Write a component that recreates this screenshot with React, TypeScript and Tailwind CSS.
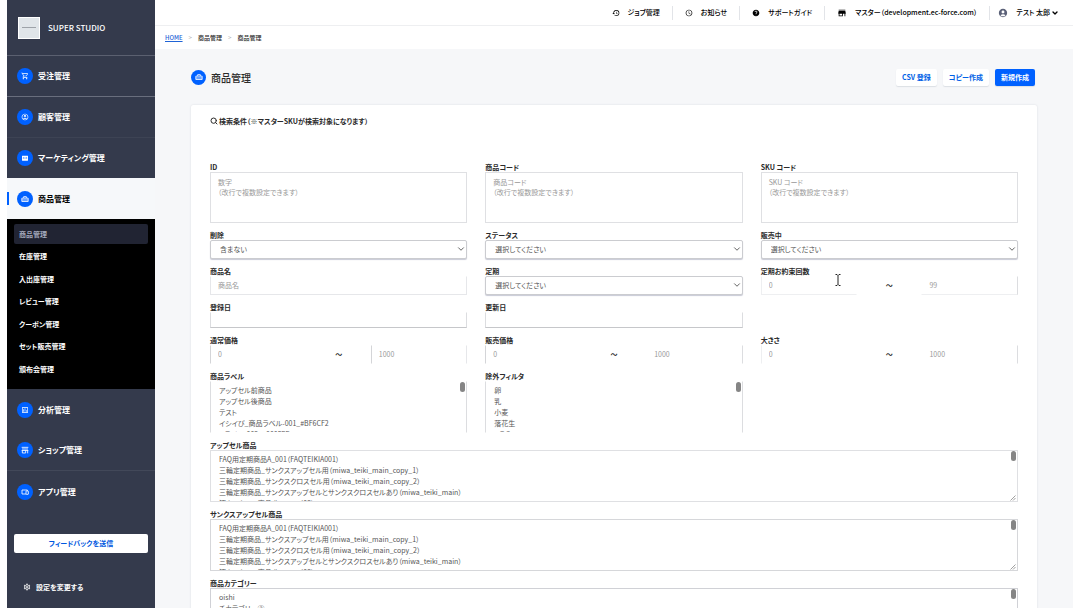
import type { ReactNode } from 'react';
import { clsx } from 'clsx';
import { twMerge } from 'tailwind-merge';
import {
    MdAccessTime,
    MdAccountCircle,
    MdHelp,
    MdHistory,
    MdOutlineAccountCircle,
    MdOutlineAssessment,
    MdOutlineSettings,
    MdOutlineShoppingCart,
    MdStore,
} from 'react-icons/md';
import { ChevronDown, Search } from 'lucide-react';

const BagIcon = () => (
    <svg viewBox="0 0 24 24" className="size-full" fill="none" stroke="currentColor" strokeWidth="2.5">
        <path d="M8 9V5h8v4M2.500 9.500h19v10h-19zM2.500 15h19" strokeLinejoin="round" />
    </svg>
);

const MegaphoneIcon = () => (
    <svg viewBox="0 0 24 24" className="size-full">
        <rect x="3" y="5" width="18" height="15" rx="1" fill="currentColor" />
        <path d="M7 15v-5l5 3 5-3v5" fill="none" stroke="#0061ff" strokeWidth="1.5" />
    </svg>
);

const ShopIcon = () => (
    <svg viewBox="0 0 24 24" className="size-full" fill="none" stroke="currentColor" strokeWidth="2.5">
        <path d="M2 4h20M3 9h18M2 13.500h20M4 13.500V21h10v-7.500M20 13.500V22" />
    </svg>
);

const AppIcon = () => (
    <svg viewBox="0 0 24 24" className="size-full" fill="none" stroke="currentColor" strokeWidth="2.5">
        <path d="M15 18H3V6h16v3" />
        <rect x="15" y="9" width="7" height="10" rx="1" />
    </svg>
);

const subMenu = [
    '商品管理',
    '在庫管理',
    '入出庫管理',
    'レビュー管理',
    'クーポン管理',
    'セット販売管理',
    '頒布会管理',
];

const upsellItems = [
    'FAQ用定期商品A_001（FAQTEIKIA001）',
    '三輪定期商品_サンクスアップセル用（miwa_teiki_main_copy_1）',
    '三輪定期商品_サンクスクロスセル用（miwa_teiki_main_copy_2）',
    '三輪定期商品_サンクスアップセルとサンクスクロスセルあり（miwa_teiki_main）',
    '猪クスクロス商品（iwanami02）',
];

interface MenuItemProps {
    icon: ReactNode;
    label: string;
    active?: boolean;
    className?: string;
}

const MenuItem = ({ icon, label, active, className }: MenuItemProps) => (
    <a
        href="#"
        className={twMerge(
            'flex h-[41px] items-center gap-[5px] text-[8px] font-bold',
            active ? 'bg-[#f6f8fa] text-black' : 'text-white',
            className
        )}
    >
        <span className={clsx('h-[13px] w-0.5', active && 'bg-[#0061ff]')} />
        <span className="ml-[3px] flex size-4 items-center justify-center rounded-full bg-[#0061ff] text-white">
            <span className="flex size-2">{icon}</span>
        </span>
        {label}
    </a>
);

const Sidebar = () => (
    <nav className="flex w-[148px] shrink-0 flex-col bg-[#343a4c] pb-2">
        <div className="flex h-14 items-center gap-2 border-b border-[#5b6070] pl-[11px] text-[8px] font-medium text-white">
            <span className="flex size-[22px] items-center justify-center border border-white bg-[#e0e5e9]">
                <span className="h-px w-3.5 bg-[#9da2a8]" />
            </span>
            SUPER STUDIO
        </div>
        <MenuItem
            icon={<MdOutlineShoppingCart className="size-full" />}
            label="受注管理"
            className="border-b border-[#696e7d]"
        />
        <MenuItem
            icon={<MdOutlineAccountCircle className="size-full" />}
            label="顧客管理"
            className="border-b border-[#3d4354]"
        />
        <MenuItem icon={<MegaphoneIcon />} label="マーケティング管理" className="h-10" />
        <MenuItem icon={<BagIcon />} label="商品管理" active />
        <div className="bg-black px-[7px] pt-[5px] pb-2.5">
            <ul className="flex h-[155px] flex-col justify-between text-[7px] font-bold text-white">
                {subMenu.map((label, i) => (
                    <li key={label}>
                        <a
                            href="#"
                            className={clsx(
                                'flex h-5 items-center rounded-xs pl-[5px]',
                                i === 0 && 'bg-[#212433] text-[#a3a8ba]'
                            )}
                        >
                            {label}
                        </a>
                    </li>
                ))}
            </ul>
        </div>
        <MenuItem icon={<MdOutlineAssessment className="size-full" />} label="分析管理" />
        <MenuItem icon={<ShopIcon />} label="ショップ管理" className="border-b border-[#424859]" />
        <MenuItem icon={<AppIcon />} label="アプリ管理" />
        <button
            type="button"
            className="mx-[7px] mt-[22px] h-[19px] rounded-xs bg-white text-[7px] font-bold text-[#0057e0]"
        >
            フィードバックを送信
        </button>
        <a href="#" className="mt-6 flex h-5 items-center gap-[5px] pl-4 text-[7px] font-bold text-white">
            <MdOutlineSettings className="size-2" />
            設定を変更する
        </a>
    </nav>
);

const HeaderLink = ({ icon, children }: { icon: ReactNode; children: ReactNode }) => (
    <a
        href="#"
        className="flex h-3.5 items-center gap-2 border-l border-[#e2e4e8] px-3 first:border-l-0 last:pr-0 last:pl-2"
    >
        {icon}
        <span>{children}</span>
    </a>
);

const Header = () => (
    <header className="flex h-[26px] items-center justify-end border-b border-[#eeeff1] pr-3.5 text-[7px] font-medium text-black">
        <HeaderLink icon={<MdHistory className="size-2" />}>ジョブ管理</HeaderLink>
        <HeaderLink icon={<MdAccessTime className="size-2" />}>お知らせ</HeaderLink>
        <HeaderLink icon={<MdHelp className="size-2" />}>サポートガイド</HeaderLink>
        <HeaderLink icon={<MdStore className="size-2.5" />}>マスター（development.ec-force.com）</HeaderLink>
        <HeaderLink icon={<MdAccountCircle className="size-2.5 text-[#5b6178]" />}>
            <span className="flex items-center gap-px">
                テスト 太郎
                <ChevronDown className="size-2" strokeWidth={4} />
            </span>
        </HeaderLink>
    </header>
);

const Breadcrumb = () => (
    <div className="flex h-[23px] items-center gap-1.5 pl-2.5 text-[6px] font-medium">
        <a href="#" className="text-[#1f63d6] underline">
            HOME
        </a>
        <span className="text-[#b5b5b5]">&gt;</span>
        <span>商品管理</span>
        <span className="text-[#b5b5b5]">&gt;</span>
        <span>商品管理</span>
    </div>
);

interface FieldProps {
    id: string;
    label: string;
    className?: string;
    children: ReactNode;
}

const Field = ({ id, label, className, children }: FieldProps) => (
    <div className={clsx('flex flex-col', className)}>
        <label htmlFor={id} className="h-2.5 text-[7px] leading-[10px] font-bold whitespace-nowrap">
            {label}
        </label>
        {children}
    </div>
);

const TextAreaField = ({ id, label, hint }: { id: string; label: string; hint: string }) => (
    <Field id={id} label={label}>
        <textarea
            id={id}
            placeholder={`${hint}\n（改行で複数設定できます）`}
            className="h-[51px] resize-none border border-[#dfe0e3] px-[7px] py-1 text-[7px] leading-[10px] placeholder:text-[#999]"
        />
    </Field>
);

const SelectField = ({ id, label, options }: { id: string; label: string; options: string[] }) => (
    <Field id={id} label={label}>
        <div className="relative">
            <select
                id={id}
                className="block h-[19px] w-full appearance-none rounded-xs border border-[#cbccd0] bg-white px-[9px] text-[7px] text-[#555] shadow-[0_1px_1px_#c8cad6]"
            >
                {options.map((option) => (
                    <option key={option}>{option}</option>
                ))}
            </select>
            <ChevronDown
                className="pointer-events-none absolute top-1 right-px size-2.5 text-[#444]"
                strokeWidth={2}
            />
        </div>
    </Field>
);

interface TextFieldProps {
    id: string;
    label: string;
    placeholder?: string;
    className?: string;
}

const TextField = ({ id, label, placeholder, className }: TextFieldProps) => (
    <Field id={id} label={label}>
        <input
            id={id}
            type="text"
            placeholder={placeholder}
            className={clsx(
                'w-full border border-t-transparent px-[7px] text-[7px] placeholder:text-[#999]',
                className
            )}
        />
    </Field>
);

interface RangeFieldProps {
    id: string;
    label: string;
    max: string;
    fromClass: string;
    toClass: string;
}

const RangeField = ({ id, label, max, fromClass, toClass }: RangeFieldProps) => (
    <Field id={id} label={label}>
        <div className="grid grid-cols-[3fr_2fr_3fr] items-center text-[7px]">
            <input
                id={id}
                type="text"
                placeholder="0"
                className={clsx('h-[19px] w-full border px-[7px] pb-0.5 placeholder:text-[#999]', fromClass)}
            />
            <span className="text-center font-bold">〜</span>
            <input
                type="text"
                placeholder={max}
                aria-label={`${label} 上限`}
                className={clsx('h-[19px] w-full border px-[7px] pb-0.5 placeholder:text-[#999]', toClass)}
            />
        </div>
    </Field>
);

interface ListFieldProps {
    id: string;
    label: string;
    options: string[];
    resizable?: boolean;
    className?: string;
}

const ListField = ({ id, label, options, resizable, className }: ListFieldProps) => (
    <Field id={id} label={label} className={resizable ? 'col-span-3' : undefined}>
        <div className="relative">
            <select
                id={id}
                multiple
                className={clsx(
                    'block h-[52px] w-full appearance-none overflow-y-auto border bg-white px-2 pt-[3px] text-[7px] text-[#555] [scrollbar-width:none]',
                    className
                )}
            >
                {options.map((option) => (
                    <option key={option} className="h-[11px] min-h-0 p-0 leading-[11px]">
                        {option}
                    </option>
                ))}
            </select>
            <span className="absolute top-px right-0.5 h-2.5 w-[5px] rounded-full bg-[#858585]" />
            {resizable && (
                <svg viewBox="0 0 6 6" className="absolute right-0.5 bottom-px size-1.5" stroke="#888" strokeWidth="0.8">
                    <path d="M0.500 5.500 5.500 0.500M3 5.500 5.500 3" />
                </svg>
            )}
        </div>
    </Field>
);

const SearchForm = () => (
    <form className="relative rounded-xs bg-white px-[19px] pb-6 shadow-[0_0_2px_#d5d9df]">
        <h2 className="flex items-center gap-px pt-[11px] text-[7px] leading-[10px] font-bold">
            <Search className="size-2" strokeWidth={3} />
            検索条件（※マスターSKUが検索対象になります）
        </h2>
        <div className="mt-9 grid grid-cols-3 gap-x-[18px] gap-y-[7px]">
            <TextAreaField id="id" label="ID" hint="数字" />
            <TextAreaField id="code" label="商品コード" hint="商品コード" />
            <TextAreaField id="sku" label="SKU コード" hint="SKU コード" />

            <SelectField id="deleted" label="削除" options={['含まない', '含む']} />
            <SelectField id="status" label="ステータス" options={['選択してください']} />
            <SelectField id="on-sale" label="販売中" options={['選択してください']} />

            <TextField id="name" label="商品名" placeholder="商品名" className="h-[19px] border-[#e6e7ea] pb-0.5" />
            <SelectField id="recurring" label="定期" options={['選択してください']} />
            <RangeField
                id="promised"
                label="定期お約束回数"
                max="99"
                fromClass="border-t-transparent border-r-transparent border-b-[#eeeff1] border-l-[#eeeff1]"
                toClass="border-t-transparent border-l-transparent border-b-[#eeeff1] border-r-[#dcdde0]"
            />

            <TextField id="created" label="登録日" className="h-4 border-x-[#dcdde0] border-b-[#c6c7ca]" />
            <TextField id="updated" label="更新日" className="h-4 border-x-[#dcdde0] border-b-[#c6c7ca]" />
            <div />

            <RangeField
                id="price"
                label="通常価格"
                max="1000"
                fromClass="border-y-transparent border-r-transparent border-l-[#d4d5d8]"
                toClass="border-y-transparent border-l-[#d4d5d8] border-r-[#e6e7ea]"
            />
            <RangeField
                id="sale-price"
                label="販売価格"
                max="1000"
                fromClass="border-y-transparent border-r-transparent border-l-[#d4d5d8]"
                toClass="border-y-transparent border-l-transparent border-r-[#dcdde0]"
            />
            <RangeField
                id="size"
                label="大きさ"
                max="1000"
                fromClass="border-y-transparent border-r-transparent border-l-[#eeeff1]"
                toClass="border-y-transparent border-l-transparent border-r-[#dcdde0]"
            />

            <ListField
                id="labels"
                label="商品ラベル"
                options={['アップセル前商品', 'アップセル後商品', 'テスト', 'イシイび_商品ラベル-001_#BF6CF2', 'トラベル-002_#000FFF']}
                className="border-x-[#dcdde0] border-y-transparent"
            />
            <ListField
                id="exclude"
                label="除外フィルタ"
                options={['卵', '乳', '小麦', '落花生', 'くるみ']}
                className="border-x-[#dcdde0] border-y-transparent"
            />
            <div />

            <ListField id="upsell" label="アップセル商品" options={upsellItems} resizable className="border-[#dfe0e3]" />
            <ListField
                id="thanks-upsell"
                label="サンクスアップセル商品"
                options={upsellItems}
                resizable
                className="border-[#d6d7da]"
            />
            <ListField
                id="category"
                label="商品カテゴリー"
                options={['oishi', 'チカテゴリー②']}
                resizable
                className="border-[#d0d1d6]"
            />
        </div>
        <svg
            viewBox="0 0 6 12"
            className="pointer-events-none absolute top-[169px] right-[196px] h-3 w-1.5"
            fill="none"
            stroke="#222"
        >
            <path d="M0.500 0.500h1.500l1 1 1-1h1.500M3 1.500v9M0.500 11.500h1.500l1-1 1 1h1.500" />
        </svg>
    </form>
);

const actionClass = 'h-[17px] rounded-xs px-1.5 text-[7px] font-bold shadow-[0_1px_1px_#dcdfe4]';

export default function App() {
    return (
        <div
            lang="ja"
            className="flex h-screen overflow-hidden bg-white px-[7px] font-['Noto_Sans_CJK_JP',sans-serif] text-[#2b2b2b] [font-feature-settings:'palt']"
        >
            <Sidebar />
            <div className="flex min-w-0 flex-1 flex-col">
                <Header />
                <Breadcrumb />
                <main className="min-h-0 flex-1 overflow-y-auto bg-[#f6f7f9] px-9 [scrollbar-width:none]">
                    <div className="flex h-14 items-center justify-between pr-0.5">
                        <h1 className="flex items-center gap-[5px] text-[10px] font-medium">
                            <span className="flex size-[15px] items-center justify-center rounded-full bg-[#0061ff] text-white">
                                <span className="flex size-2">
                                    <BagIcon />
                                </span>
                            </span>
                            商品管理
                        </h1>
                        <div className="flex gap-1.5">
                            <button type="button" className={clsx(actionClass, 'bg-white text-[#0061e6]')}>
                                CSV 登録
                            </button>
                            <button type="button" className={clsx(actionClass, 'bg-white text-[#0061e6]')}>
                                コピー作成
                            </button>
                            <button type="button" className={clsx(actionClass, 'bg-[#0061ff] text-white')}>
                                新規作成
                            </button>
                        </div>
                    </div>
                    <SearchForm />
                </main>
            </div>
        </div>
    );
}
